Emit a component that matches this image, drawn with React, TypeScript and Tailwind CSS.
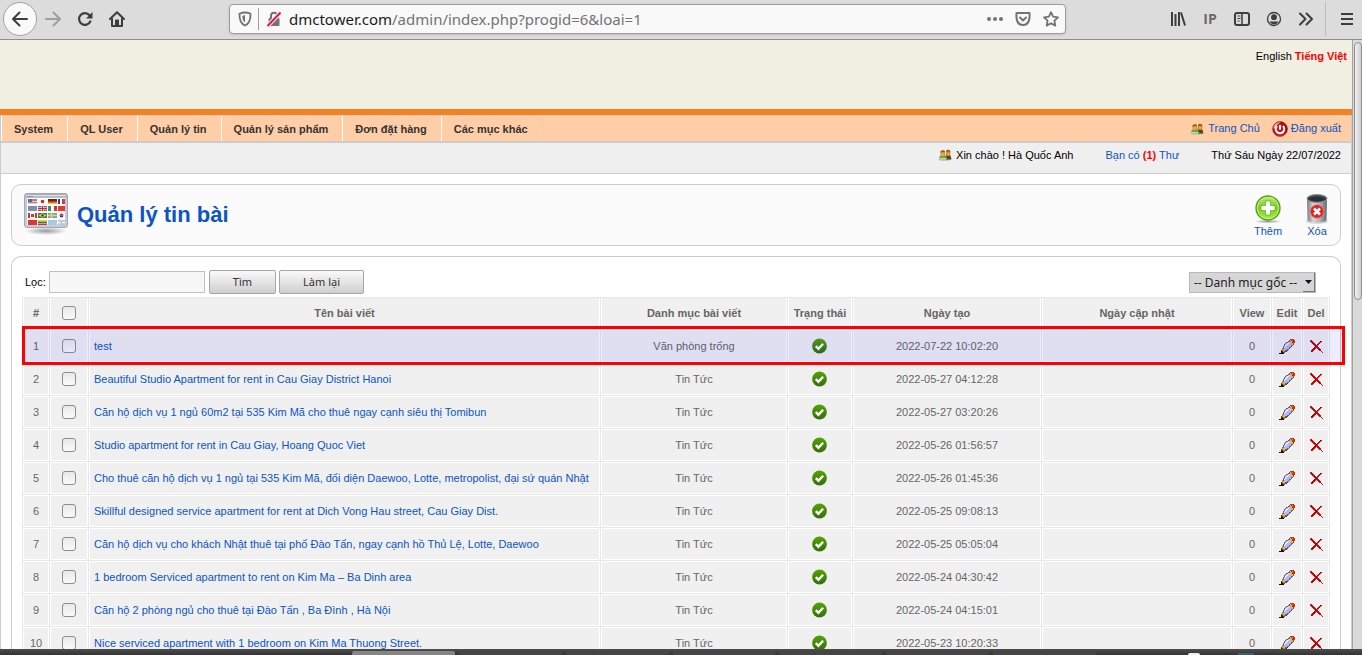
import React from 'react';

interface Article {
  title: string;
  category: string;
  created: string;
}

const MENU = ['System', 'QL User', 'Quản lý tin', 'Quản lý sản phẩm', 'Đơn đặt hàng', 'Các mục khác'];

const ARTICLES: Article[] = [
  { title: 'test', category: 'Văn phòng trống', created: '2022-07-22 10:02:20' },
  { title: 'Beautiful Studio Apartment for rent in Cau Giay District Hanoi', category: 'Tin Tức', created: '2022-05-27 04:12:28' },
  { title: 'Căn hộ dịch vụ 1 ngủ 60m2 tại 535 Kim Mã cho thuê ngay cạnh siêu thị Tomibun', category: 'Tin Tức', created: '2022-05-27 03:20:26' },
  { title: 'Studio apartment for rent in Cau Giay, Hoang Quoc Viet', category: 'Tin Tức', created: '2022-05-26 01:56:57' },
  { title: 'Cho thuê căn hộ dịch vụ 1 ngủ tại 535 Kim Mã, đối diện Daewoo, Lotte, metropolist, đại sứ quán Nhật', category: 'Tin Tức', created: '2022-05-26 01:45:36' },
  { title: 'Skillful designed service apartment for rent at Dich Vong Hau street, Cau Giay Dist.', category: 'Tin Tức', created: '2022-05-25 09:08:13' },
  { title: 'Căn hộ dịch vụ cho khách Nhật thuê tại phố Đào Tấn, ngay cạnh hồ Thủ Lệ, Lotte, Daewoo', category: 'Tin Tức', created: '2022-05-25 05:05:04' },
  { title: '1 bedroom Serviced apartment to rent on Kim Ma – Ba Dinh area', category: 'Tin Tức', created: '2022-05-24 04:30:42' },
  { title: 'Căn hộ 2 phòng ngủ cho thuê tại Đào Tấn , Ba Đình , Hà Nội', category: 'Tin Tức', created: '2022-05-24 04:15:01' },
  { title: 'Nice serviced apartment with 1 bedroom on Kim Ma Thuong Street.', category: 'Tin Tức', created: '2022-05-23 10:20:33' },
];

/* ---------- Icons ---------- */

const UsersIcon: React.FC = () => (
  <svg width="14" height="12" viewBox="0 0 14 12">
    <ellipse cx="6.5" cy="10.6" rx="6.3" ry="1.2" fill="#b9bdb2" />
    <path d="M7 6.5h5.5l1 4H8z" fill="#5b4326" />
    <path d="M1 9.8c0-2 .8-3.3 2.5-3.3h2.8c1.6 0 2.4 1.3 2.6 3.3z" fill="#5cae3c" />
    <path d="M1.2 9.2h7.4v.9H1z" fill="#c8e8b8" />
    <rect x="2.5" y="1.5" width="4.5" height="6" rx="1.8" fill="#d9902c" />
    <rect x="8" y="1" width="4.2" height="6" rx="1.8" fill="#c77f22" />
    <path d="M2.3 3.4C2.3.9 7.2.4 7.2 3.2L5.5 2.8zM7.8 2.6c.6-2.7 5-2.2 4.6.9l-1.6-1z" fill="#94601c" />
    <path d="M3.5 4.2h2.2v2H3.5zM9.2 3.8h2v2h-2z" fill="#f3b757" />
  </svg>
);

const PowerIcon: React.FC = () => (
  <svg width="16" height="16" viewBox="0 0 16 16">
    <circle cx="8" cy="8" r="7.4" fill="#c8161c" stroke="#a5393b" strokeWidth="0.8" />
    <path d="M8 .8a7.2 7.2 0 0 1 5.400 12C14 8 11 5 8 .8z" fill="#a50d12" />
    <path d="M1.500 7C2 3.200 5 1 8.500 1.200 6 2.800 4 4.500 3.200 8z" fill="#f2a3a3" />
    <path d="M5 5a4.200 4.200 0 1 0 6 0" fill="none" stroke="#fff" strokeWidth="2" />
    <path d="M8 4v4.500" stroke="#fff" strokeWidth="2" />
  </svg>
);

const FLAGS = [
  ['#b97b8d', '#fff', '#d8291c', '#27408f'],
  ['#7c90b3', '#a1526e', '#2e9a56', '#e33b2e'],
  ['#fff', '#3c8b3a', '#6fa0c4', '#fff'],
  ['#e0372b', '#f0cb25', '#a9c8ea', '#a8c9ea'],
];

const LanguagesIcon: React.FC = () => (
  <svg width="46" height="44" viewBox="0 0 46 44">
    <defs>
      <linearGradient id="win" x1="0" y1="0" x2="0" y2="1">
        <stop offset="0" stopColor="#a1a5ae" />
        <stop offset="0.15" stopColor="#c3c7d2" />
        <stop offset="1" stopColor="#c6cbdc" />
      </linearGradient>
      <radialGradient id="winShadow">
        <stop offset="0" stopColor="#999" />
        <stop offset="1" stopColor="#999" stopOpacity="0" />
      </radialGradient>
    </defs>
    <ellipse cx="23" cy="38" rx="21" ry="4" fill="url(#winShadow)" />
    <rect x="1.500" y="0.500" width="43" height="34" rx="2.500" fill="url(#win)" stroke="#a4a8b2" />
    <path d="M3 2.500h40" stroke="#dfe1e6" />
    <path d="M4 3.500h6" stroke="#8e929c" />
    <rect x="4" y="5" width="38" height="27" fill="#fbfbfb" />
    {FLAGS.map((row, r) =>
      row.map((color, c) => (
        <rect key={`${r}-${c}`} x={5 + c * 10} y={6 + r * 7} width={c === 3 ? (r === 0 ? 2 : 7) : 9} height="5" fill={color} />
      ))
    )}
    <path d="M5 8.500h9M5 10.500h9" stroke="#edc9ce" />
    <path d="M5 6h4v3H5z" fill="#5c6aa1" />
    <circle cx="19.500" cy="8.500" r="1.800" fill="#e0201b" />
    <path d="M25 6h9v2h-9z" fill="#4a3027" />
    <path d="M25 9.500h9V11h-9z" fill="#f3c11c" />
    <path d="M39 6h3v5h-3z" fill="#e2373d" />
    <path d="M15 15.500h9M19.500 13v5" stroke="#fff" strokeWidth="2" />
    <path d="M15 15.500h9M19.500 13v5" stroke="#d5232e" />
    <path d="M28 13h3v5h-3z" fill="#fff" />
    <path d="M31 13h3v5h-3z" fill="#dc3034" />
    <path d="M5 20h2v5H5zM12 20h2v5h-2zM8 21h3v3H8z" fill="#e0302b" />
    <path d="M19.500 20.500l4 2-4 2-4-2z" fill="#f4db2c" />
    <circle cx="19.500" cy="22.500" r="1.300" fill="#27408f" />
    <path d="M25 22.500h9M28.500 20v5" stroke="#f2d547" strokeWidth="1.500" />
    <path d="M36.500 22.500a2 2 0 0 1 4 0z" fill="#d8292f" />
    <path d="M36.500 22.500a2 2 0 0 0 4 0z" fill="#25408f" />
    <path d="M15 29.500h9" stroke="#3766b0" strokeWidth="1.500" />
    <path d="M15 31.500h9" stroke="#d3343a" />
    <path d="M35 29.500h7" stroke="#fff" strokeWidth="1.500" />
    <circle cx="38.500" cy="29.500" r="0.900" fill="#e9b73e" />
  </svg>
);

const AddIcon: React.FC = () => (
  <svg width="30" height="32" viewBox="0 0 30 32">
    <defs>
      <linearGradient id="add" x1="0" y1="0" x2="0" y2="1">
        <stop offset="0" stopColor="#b8ea6c" />
        <stop offset="0.5" stopColor="#7cce24" />
        <stop offset="1" stopColor="#a6f23c" />
      </linearGradient>
      <radialGradient id="addShadow">
        <stop offset="0" stopColor="#999" />
        <stop offset="1" stopColor="#999" stopOpacity="0" />
      </radialGradient>
    </defs>
    <ellipse cx="15" cy="28.500" rx="14" ry="2" fill="url(#addShadow)" />
    <circle cx="15" cy="15" r="12" fill="url(#add)" stroke="#4d9f17" strokeWidth="1.300" />
    <circle cx="15" cy="15" r="10.700" fill="none" stroke="#d2f69e" strokeWidth="0.800" />
    <path d="M12.500 8h5v4.500H22v5h-4.500V22h-5v-4.500H8v-5h4.500z" fill="#fff" stroke="#68ae2a" strokeWidth="0.800" />
  </svg>
);

const TrashIcon: React.FC = () => (
  <svg width="24" height="32" viewBox="0 0 24 32">
    <defs>
      <linearGradient id="can" x1="0" y1="0" x2="1" y2="0">
        <stop offset="0" stopColor="#77777d" />
        <stop offset="0.3" stopColor="#d5d5da" />
        <stop offset="0.65" stopColor="#b0b0b6" />
        <stop offset="1" stopColor="#66666c" />
      </linearGradient>
    </defs>
    <ellipse cx="12" cy="28.500" rx="11.500" ry="2.500" fill="#dcdcdc" />
    <path d="M2 5l.5 22c0 3.500 19 3.500 19 0L22 5z" fill="url(#can)" />
    <ellipse cx="12" cy="5.500" rx="10" ry="4" fill="#4a4d52" stroke="#93959b" strokeWidth="0.900" />
    <path d="M3.500 6c3-3.500 14-3.500 17 0-3 3-14 3-17 0z" fill="#2c2f34" />
    <circle cx="12" cy="18.500" r="6.800" fill="#df2525" stroke="#f28484" strokeWidth="0.700" />
    <path d="M9 15.500l6 6M15 15.500l-6 6" stroke="#fff" strokeWidth="2.600" />
  </svg>
);

const TickIcon: React.FC = () => (
  <svg className="mx-auto block" width="16" height="16" viewBox="0 0 16 16" role="img" aria-label="on">
    <defs>
      <linearGradient id="tick" x1="0" y1="0" x2="0" y2="1">
        <stop offset="0" stopColor="#55a505" />
        <stop offset="1" stopColor="#356f0b" />
      </linearGradient>
    </defs>
    <circle cx="7.500" cy="8" r="7.400" fill="url(#tick)" />
    <path d="M3.800 8.200l2.600 2.500 4.700-5" fill="none" stroke="#fff" strokeWidth="2.400" />
  </svg>
);

// Small bitmap icons, one letter per pixel
const PALETTE: Record<string, string> = {
  k: '#111111',
  b: '#6b4a1c',
  g: '#b98a25',
  y: '#edb621',
  d: '#5d618f',
  l: '#b5b8f2',
  w: '#e8e9ff',
  r: '#c92d19',
  p: '#f58d6e',
  x: '#e01212',
  z: '#a80505',
};

const PENCIL = [
  '...........drrr.',
  '..........dyrprr',
  '.........ddyyrrr',
  '.......ddlwyyrrr',
  '......dlwwllyyr.',
  '.....dlwwlllyyd.',
  '.....dwwlllldd..',
  '....dlwllllld...',
  '....dwlllldd....',
  '...gdllllld.....',
  '...gyllldd......',
  '..bgyyddb.......',
  '..kbggbb........',
  '..kkbb..........',
  'kkkkk...........',
];

const CROSS = [
  'xx...........',
  'xzx.......zz.',
  '.xzx.....zx..',
  '..xzx...zx...',
  '...xzx.zx....',
  '....xzzx.....',
  '.....zzx.....',
  '....zzxzx....',
  '...zzx.xzx...',
  '..zzx...xzx..',
  '.zzx.....xz..',
  '.zx........x.',
  '............x',
];

const PixelIcon: React.FC<{ rows: string[] }> = ({ rows }) => (
  <svg width={rows[0].length} height={rows.length} viewBox={`0 0 ${rows[0].length} ${rows.length}`} shapeRendering="crispEdges">
    {rows.map((row, y) =>
      row.split('').map((c, x) => (c === '.' ? null : <rect key={`${x}-${y}`} x={x} y={y} width="1" height="1" fill={PALETTE[c]} />))
    )}
  </svg>
);

/* ---------- Browser toolbar ---------- */

const toolButton = 'flex h-8 w-8 items-center justify-center text-[#3d3d3d]';

const BrowserBar: React.FC = () => (
  <header className="flex h-10 shrink-0 items-center border-b border-[#8e8e8a] bg-[#dcdcdc] pb-0.5 pl-[3px]">
    <button aria-label="Back" className="flex size-[34px] items-center justify-center rounded-full border border-[#a3a3a3] bg-[#f9f9f9] text-[#3d3d3d]">
      <svg width="16" height="16" viewBox="0 0 16 16" fill="none" stroke="currentColor" strokeWidth="2" strokeLinecap="round" strokeLinejoin="round">
        <path d="M15 8H1.500M7.500 1.500L1 8l6.500 6.500" />
      </svg>
    </button>
    <button aria-label="Forward" className="flex h-8 w-8 items-center justify-center text-[#9f9f9f]">
      <svg width="16" height="16" viewBox="0 0 16 16" fill="none" stroke="currentColor" strokeWidth="2" strokeLinecap="round" strokeLinejoin="round">
        <path d="M1 8h13.500M8.500 1.500L15 8l-6.500 6.500" />
      </svg>
    </button>
    <button aria-label="Reload" className={toolButton}>
      <svg width="16" height="16" viewBox="0 0 16 16" fill="none" stroke="currentColor" strokeWidth="2.200">
        <path d="M13.300 10.500A5.900 5.900 0 1 1 12.500 4.200" strokeLinecap="round" />
        <path d="M15.500 1v6.500H9z" fill="currentColor" stroke="none" />
      </svg>
    </button>
    <button aria-label="Home" className={toolButton}>
      <svg width="16" height="16" viewBox="0 0 16 16" fill="none" stroke="currentColor" strokeWidth="2" strokeLinecap="round" strokeLinejoin="round">
        <path d="M1 8l7-6.700L15 8M3 7.500V15h10V7.500" />
        <path d="M6.500 15V9h3v6" fill="currentColor" strokeWidth="1" />
      </svg>
    </button>

    <div className="mr-24 ml-24 flex h-[30px] flex-1 items-center rounded-sm border border-[#9c9c9c] bg-[#f9f9f9] pr-1.5 pl-1.5 shadow-sm">
      <svg className="mx-0.5 shrink-0 text-[#737373]" width="14" height="16" viewBox="0 0 14 16" fill="none" stroke="currentColor" strokeWidth="1.800">
        <path d="M7 1.500c2 0 4 .5 5.500 1.200C12.700 8 11.500 12.500 7 14.500 2.500 12.500 1.300 8 1.500 2.700 3 2 5 1.500 7 1.500z" />
        <path d="M7 4.300v7.200C5 10 4.300 8 4.300 4.800z" fill="currentColor" stroke="none" />
      </svg>
      <span className="mx-1 h-[22px] w-px bg-[#a0a0a0]" />
      <svg className="mr-1 ml-[3px] shrink-0" width="16" height="16" viewBox="0 0 16 16">
        <path d="M5 7V4.800a3 3 0 0 1 6 0V7" fill="none" stroke="#737373" strokeWidth="2" />
        <rect x="2.500" y="7" width="11" height="8" rx="1" fill="#737373" />
        <path d="M1.500 15L14.500 1.500" stroke="#f9f9f9" strokeWidth="4" />
        <path d="M1.500 15L14.500 1.500" stroke="#fb0b4b" strokeWidth="2" />
      </svg>
      <div role="textbox" aria-label="Address" className="ml-[3px] flex-1 pt-px font-['Noto_Sans','Open_Sans',sans-serif] text-[15px] whitespace-nowrap text-[#737373]">
        <span className="text-[#1c1c1c]">dmctower.com</span>/admin/index.php?progid=6&amp;loai=1
      </div>
      <div className="flex gap-3 text-[#737373]">
        <button aria-label="Page actions">
          <svg width="16" height="16" viewBox="0 0 16 16" fill="currentColor">
            <circle cx="2" cy="8" r="2" />
            <circle cx="8" cy="8" r="2" />
            <circle cx="14" cy="8" r="2" />
          </svg>
        </button>
        <button aria-label="Save to Pocket">
          <svg width="16" height="16" viewBox="0 0 16 16" fill="none" stroke="currentColor" strokeWidth="2" strokeLinecap="round" strokeLinejoin="round">
            <path d="M1.500 2h13c.5 6-.5 12-6.500 12S1 8 1.500 2z" />
            <path d="M5 6.500l3 3 3-3" />
          </svg>
        </button>
        <button aria-label="Bookmark">
          <svg width="16" height="16" viewBox="0 0 16 16" fill="none" stroke="currentColor" strokeWidth="1.800" strokeLinejoin="round">
            <path d="M8 1.200l2.100 4.500 4.900.6-3.600 3.400.9 4.900L8 12.200l-4.300 2.400.9-4.900L1 6.300l4.900-.6z" />
          </svg>
        </button>
      </div>
    </div>

    <button aria-label="Library" className={toolButton}>
      <svg width="16" height="16" viewBox="0 0 16 16" fill="none" stroke="currentColor" strokeWidth="2">
        <path d="M2 1v14M5.500 3v12M9 1v14M11 1.500l4 13" />
      </svg>
    </button>
    <button className="flex h-8 w-8 items-center justify-center font-['Open_Sans',sans-serif] text-sm font-bold text-[#6a6a6a]">IP</button>
    <button aria-label="Sidebars" className={toolButton}>
      <svg width="16" height="16" viewBox="0 0 16 16" fill="none" stroke="currentColor" strokeWidth="2">
        <rect x="1" y="2" width="14" height="12" rx="2" />
        <path d="M8 2v12" strokeWidth="1.500" />
        <path d="M3.500 5h3M3.500 7.500h3M3.500 10h2" strokeWidth="1" />
      </svg>
    </button>
    <button aria-label="Account" className={toolButton}>
      <svg width="16" height="16" viewBox="0 0 16 16">
        <circle cx="8" cy="8" r="6.500" fill="none" stroke="currentColor" strokeWidth="1.300" />
        <circle cx="8" cy="6.200" r="2.900" fill="currentColor" />
        <path d="M3.500 10.500h9c-1 2-2.600 3-4.500 3s-3.500-1-4.500-3z" fill="currentColor" />
      </svg>
    </button>
    <button aria-label="More tools" className={toolButton}>
      <svg width="16" height="16" viewBox="0 0 16 16" fill="none" stroke="currentColor" strokeWidth="2" strokeLinecap="round" strokeLinejoin="round">
        <path d="M2 2.500L7.500 8 2 13.500M8.500 2.500L14 8l-5.500 5.500" />
      </svg>
    </button>
    <span className="ml-[3px] h-[34px] w-px bg-[#bcbcbc]" />
    <button aria-label="Menu" className="flex h-8 w-9 items-center justify-center pl-1.5 text-[#3d3d3d]">
      <svg width="14" height="14" viewBox="0 0 14 14" stroke="currentColor" strokeWidth="2">
        <path d="M1 2h12M1 7h12M1 12h12" />
      </svg>
    </button>
  </header>
);

/* ---------- Page ---------- */

const SiteHeader: React.FC = () => (
  <>
    <div className="h-[69px] bg-[#f1efe2] px-[5px] pt-2 text-right leading-4">
      <a href="#en" className="text-black">English</a>{' '}
      <a href="#vi" className="font-bold text-[#ff0000]">Tiếng Việt</a>
    </div>
    <div className="h-1.5 bg-[#f58220]" />
  </>
);

const NavBar: React.FC = () => (
  <nav className="flex h-7 items-stretch justify-between border-t border-b-2 border-[#ccc] bg-[#ffcea6]">
    <ul className="flex border-l border-white">
      {MENU.map((item) => (
        <li key={item} className="flex items-center border-r border-white pt-0.5 pr-3.5 pl-3 font-bold text-[#333] last:border-[#e6cfbb]">
          <a href="#menu">{item}</a>
        </li>
      ))}
    </ul>
    <div className="flex items-center gap-3 pr-2.5 text-[#0b55c4]">
      <a href="#home" className="flex items-center gap-1">
        <UsersIcon />
        Trang Chủ
      </a>
      <a href="#logout" className="flex items-center gap-[3px]">
        <PowerIcon />
        Đăng xuất
      </a>
    </div>
  </nav>
);

const StatusBar: React.FC = () => (
  <div className="flex h-[31px] items-start justify-end gap-8 border-b border-[#ccc] bg-[#efefef] pt-1 pr-2.5 leading-4">
    <span className="flex items-center gap-1 text-black">
      <UsersIcon />
      Xin chào ! Hà Quốc Anh
    </span>
    <a href="#mail" className="text-[#0b55c4]">
      Bạn có <b className="text-[#ff0000]">(1)</b> Thư
    </a>
    <span className="text-black">Thứ Sáu Ngày 22/07/2022</span>
  </div>
);

const TitlePanel: React.FC = () => (
  <section className="flex h-[62px] items-center justify-between rounded-[10px] border border-[#ccc] bg-[#fbfbfb] pr-[11px] pl-[11px]">
    <div className="flex items-center gap-2">
      <LanguagesIcon />
      <h1 className="text-[22px] leading-7 font-bold text-[#0b55c4]">Quản lý tin bài</h1>
    </div>
    <div className="flex gap-[22px] text-[#0b55c4]">
      <button className="flex flex-col items-center leading-3">
        <AddIcon />
        Thêm
      </button>
      <button className="flex flex-col items-center leading-3">
        <TrashIcon />
        Xóa
      </button>
    </div>
  </section>
);

const Tick: React.FC<{ label: string }> = ({ label }) => (
  <input
    type="checkbox"
    aria-label={label}
    className="mx-auto block size-3.5 appearance-none rounded-[3px] border border-[#8d8d8d] bg-linear-to-b from-[#e9e9e9] to-[#fafafa]"
  />
);

const th = 'border-x border-b border-white bg-[#f0f0f0] p-0 text-center font-bold whitespace-nowrap';
const td = 'border border-white bg-[#f0f0f0] p-0 text-center';

const ArticleTable: React.FC = () => (
  <table className="w-full table-fixed border-separate border-spacing-px bg-[#e7e7e7] text-[#666]">
    <colgroup>
      <col className="w-[26px]" />
      <col className="w-[38px]" />
      <col />
      <col className="w-[186px]" />
      <col className="w-16" />
      <col className="w-[188px]" />
      <col className="w-[190px]" />
      <col className="w-[38px]" />
      <col className="w-[30px]" />
      <col className="w-[26px]" />
    </colgroup>
    <thead>
      <tr className="h-[31px]">
        <th className={th}>#</th>
        <th className={th}><Tick label="Chọn tất cả" /></th>
        <th className={th}>Tên bài viết</th>
        <th className={th}>Danh mục bài viết</th>
        <th className={th}>Trạng thái</th>
        <th className={th}>Ngày tạo</th>
        <th className={th}>Ngày cập nhật</th>
        <th className={th}>View</th>
        <th className={th}>Edit</th>
        <th className={th}>Del</th>
      </tr>
    </thead>
    <tbody>
      {ARTICLES.map((article, i) => (
        <tr key={article.created} className="relative h-8">
          <td className={td}>
            {i + 1}
            {/* Marker around the newest article */}
            {i === 0 && (
              <div className="pointer-events-none absolute -top-1 -right-4 -bottom-[3px] left-0 z-10 -ml-px border-3 border-[#ff0000] bg-[#0000ff]/7" />
            )}
          </td>
          <td className={td}><Tick label={article.title} /></td>
          <td className="border border-white bg-[#f0f0f0] px-1 py-0 text-left whitespace-nowrap">
            <a href="#edit" className="text-[#0b55c4]">{article.title}</a>
          </td>
          <td className={td}>{article.category}</td>
          <td className={td}><TickIcon /></td>
          <td className={td}>{article.created}</td>
          <td className={td} />
          <td className={td}>0</td>
          <td className={td}>
            <button aria-label="Edit" className="mx-auto block"><PixelIcon rows={PENCIL} /></button>
          </td>
          <td className={td}>
            <button aria-label="Delete" className="mx-auto block"><PixelIcon rows={CROSS} /></button>
          </td>
        </tr>
      ))}
    </tbody>
  </table>
);

const grayButton =
  "h-6 rounded-xs border border-[#a6a6a6] bg-linear-to-b from-[#fafafa] to-[#cfcfcf] px-[23px] font-['Noto_Sans','Open_Sans',sans-serif] text-[#333]";

const ListPanel: React.FC = () => (
  <section className="rounded-t-[10px] border border-b-0 border-[#ccc] bg-white px-2.5 pt-[13px]">
    <form className="mb-[3px] flex items-center justify-between pr-3.5 pl-[3px]" onSubmit={(e) => e.preventDefault()}>
      <div className="flex items-center">
        <label htmlFor="filter" className="mr-[3px] text-black">Lọc:</label>
        <input id="filter" type="text" className="mr-1 h-[22px] w-[156px] border border-[#c0c0c0] bg-[#f7f7f7] px-1" />
        <button type="submit" className={grayButton}>Tìm</button>
        <button type="reset" className={`${grayButton} ml-[3px]`}>Làm lại</button>
      </div>
      <div className="relative">
        <select
          aria-label="Danh mục"
          className="block h-[21px] w-[127px] appearance-none border border-[#b9b9b9] bg-[#d6d6d6] pt-px pl-1 font-['Noto_Sans','Open_Sans',sans-serif] text-xs text-[#222]"
        >
          <option>-- Danh mục gốc --</option>
        </select>
        <span className="pointer-events-none absolute inset-y-px right-px flex w-3 items-center justify-center border-r border-b border-[#777]">
          <svg width="7" height="4" viewBox="0 0 7 4"><path d="M0 0h7L3.500 4z" fill="#111" /></svg>
        </span>
      </div>
    </form>
    <ArticleTable />
  </section>
);

const Taskbar: React.FC = () => (
  <footer className="relative flex h-1.5 shrink-0 items-end justify-center gap-1 bg-linear-to-b from-[#4d4d4d] to-[#333] pr-[266px] pl-[352px]">
    <div className="h-1 flex-1 rounded-t-xs bg-[#858585]" />
    {[0, 1, 2, 3, 4, 5].map((n) => (
      <div key={n} className="h-1 flex-1 rounded-t-xs bg-[#454545]" />
    ))}
    <div className="absolute right-[162px] bottom-0 h-0.5 w-3 rounded-t-full bg-[#eee]" />
    <div className="absolute right-[108px] bottom-0 h-0.5 w-4 bg-[#3f5d6c]" />
  </footer>
);

const App: React.FC = () => (
  <div className="flex h-screen flex-col overflow-hidden bg-white font-['Liberation_Sans',Arial,sans-serif] text-[11px]">
    <BrowserBar />
    <div className="flex min-h-0 flex-1">
      <main className="min-w-0 flex-1 overflow-hidden">
        <SiteHeader />
        <div className="border-x border-[#ccc]">
          <NavBar />
          <StatusBar />
          <div className="flex flex-col gap-2.5 p-2.5">
            <TitlePanel />
            <ListPanel />
          </div>
        </div>
      </main>
      {/* Page scrollbar */}
      <div className="w-2.5 shrink-0 border-l border-[#a3a3a3] bg-[#d9d9d9] pt-0.5 pl-px">
        <div className="h-[258px] rounded-md border border-[#8f8f8f] bg-linear-to-r from-[#f0f0f0] to-[#cfcfcf]" />
      </div>
    </div>
    <Taskbar />
  </div>
);

export default App;
